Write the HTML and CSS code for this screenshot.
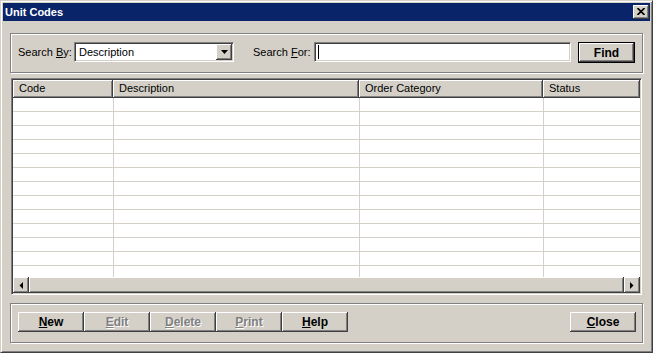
FILE: index.html
```html
<!DOCTYPE html>
<html lang="en">
<head>
    <meta charset="UTF-8">
    <title>Unit Codes</title>
    <link rel="stylesheet" href="styles.css">
</head>
<body>
    <div class="window">
        <div class="titlebar">
            <span class="title">Unit Codes</span>
            <span class="title-close">
                <svg width="8" height="7" viewBox="0 0 8 7"><path d="M0.5 0 L7.5 7 M7.5 0 L0.5 7" stroke="#000" stroke-width="1.6"/></svg>
            </span>
        </div>
        <div class="content">
            <div class="group search">
                <label class="label label-by">Search <u>B</u>y:</label>
                <div class="combo">
                    <span class="combo-text">Description</span>
                    <span class="combo-btn">
                        <svg width="7" height="4" viewBox="0 0 7 4"><polygon points="0,0 7,0 3.5,4" fill="#000"/></svg>
                    </span>
                </div>
                <label class="label label-for">Search <u>F</u>or:</label>
                <div class="field"><span class="caret"></span></div>
                <button class="btn btn-default">Find</button>
            </div>

            <div class="grid">
                <div class="grid-head">
                    <div class="col col-code">Code</div>
                    <div class="col col-desc">Description</div>
                    <div class="col col-cat">Order Category</div>
                    <div class="col col-status">Status</div>
                </div>
                <div class="grid-body">
                    <div class="row"><span></span><span></span><span></span><span></span></div>
                    <div class="row"><span></span><span></span><span></span><span></span></div>
                    <div class="row"><span></span><span></span><span></span><span></span></div>
                    <div class="row"><span></span><span></span><span></span><span></span></div>
                    <div class="row"><span></span><span></span><span></span><span></span></div>
                    <div class="row"><span></span><span></span><span></span><span></span></div>
                    <div class="row"><span></span><span></span><span></span><span></span></div>
                    <div class="row"><span></span><span></span><span></span><span></span></div>
                    <div class="row"><span></span><span></span><span></span><span></span></div>
                    <div class="row"><span></span><span></span><span></span><span></span></div>
                    <div class="row"><span></span><span></span><span></span><span></span></div>
                    <div class="row"><span></span><span></span><span></span><span></span></div>
                    <div class="row"><span></span><span></span><span></span><span></span></div>
                </div>
                <div class="hscroll">
                    <span class="sb-btn">
                        <svg width="4" height="7" viewBox="0 0 4 7"><polygon points="4,0 4,7 0.5,3.5" fill="#000"/></svg>
                    </span>
                    <span class="sb-thumb"></span>
                    <span class="sb-btn">
                        <svg width="4" height="7" viewBox="0 0 4 7"><polygon points="0,0 0,7 3.5,3.5" fill="#000"/></svg>
                    </span>
                </div>
            </div>

            <div class="group actions">
                <button class="btn"><u>N</u>ew</button>
                <button class="btn" disabled><u>E</u>dit</button>
                <button class="btn" disabled><u>D</u>elete</button>
                <button class="btn" disabled><u>P</u>rint</button>
                <button class="btn"><u>H</u>elp</button>
                <button class="btn btn-close"><u>C</u>lose</button>
            </div>
        </div>
    </div>
</body>
</html>
```

FILE: styles.css
```css
body {
    margin: 0;
    background: #d4d0c8;
    font-family: "Liberation Sans", Arial, sans-serif;
    font-size: 11px;
    color: #000;
}
.window {
    width: 653px;
    height: 353px;
    box-sizing: border-box;
    border: 1px solid;
    border-color: #d4d0c8 #404040 #404040 #d4d0c8;
    box-shadow: inset 1px 1px #fff, inset -1px -1px #808080;
    padding: 2px;
    background: #d4d0c8;
    display: flex;
    flex-direction: column;
}
.titlebar {
    height: 18px;
    background: #0a246a;
    display: flex;
    align-items: center;
    padding: 0 1px 0 2px;
}
.title {
    flex: 1;
    color: #fff;
    font-weight: bold;
    font-size: 11px;
}
.title-close {
    width: 16px;
    height: 14px;
    box-sizing: border-box;
    background: #d4d0c8;
    box-shadow: inset -1px -1px #404040, inset 1px 1px #fff, inset -2px -2px #808080, inset 2px 2px #d4d0c8;
    display: flex;
    align-items: center;
    justify-content: center;
    padding-bottom: 1px;
}
.content {
    padding: 12px 7px 0 7px;
}

/* etched group box */
.group {
    height: 40px;
    box-sizing: border-box;
    border: 1px solid #808080;
    box-shadow: 1px 1px #fff, inset 1px 1px #fff;
    display: flex;
    align-items: flex-start;
    padding: 8px 6px 0 7px;
}
.label {
    line-height: 20px;
    white-space: nowrap;
}
.label-by {
    width: 56px;
}
.label-for {
    width: 61px;
    margin-left: 19px;
}
.combo, .field {
    height: 20px;
    box-sizing: border-box;
    border: 1px solid;
    border-color: #808080 #fff #fff #808080;
    box-shadow: inset 1px 1px #404040, inset -1px -1px #d4d0c8;
    background: #fff;
    padding: 1px;
    display: flex;
}
.combo {
    width: 160px;
}
.combo-text {
    flex: 1;
    line-height: 16px;
    padding-left: 3px;
}
.combo-btn {
    width: 16px;
    height: 16px;
    box-sizing: border-box;
    background: #d4d0c8;
    box-shadow: inset -1px -1px #404040, inset 1px 1px #fff, inset -2px -2px #808080, inset 2px 2px #d4d0c8;
    display: flex;
    align-items: center;
    justify-content: center;
}
.field {
    width: 257px;
    align-items: center;
}
.caret {
    width: 1px;
    height: 14px;
    background: #000;
    margin-left: 2px;
}
.btn {
    width: 66px;
    height: 20px;
    border: 0;
    padding: 0;
    background: #d4d0c8;
    box-shadow: inset -1px -1px #404040, inset 1px 1px #fff, inset -2px -2px #808080, inset 2px 2px #d4d0c8;
    font-family: "Liberation Sans", Arial, sans-serif;
    font-size: 12px;
    font-weight: bold;
    color: #000;
}
.btn:disabled {
    color: #808080;
    text-shadow: 1px 1px #fff;
}
.btn-default {
    width: 57px;
    height: 21px;
    margin-left: 7px;
    border: 1px solid #000;
}
.btn-close {
    margin-left: auto;
}

/* list view */
.grid {
    height: 217px;
    box-sizing: border-box;
    margin: 5px 1px 0 1px;
    border: 1px solid;
    border-color: #808080 #fff #fff #808080;
    box-shadow: inset 1px 1px #404040, inset -1px -1px #d4d0c8;
    padding: 1px;
    background: #fff;
    display: flex;
    flex-direction: column;
}
.grid-head {
    display: flex;
    height: 18px;
    flex-shrink: 0;
}
.col {
    box-sizing: border-box;
    background: #d4d0c8;
    box-shadow: inset -1px -1px #404040, inset 1px 1px #fff, inset -2px -2px #808080, inset 2px 2px #d4d0c8;
    padding-left: 6px;
    line-height: 17px;
    white-space: nowrap;
}
.col-code { width: 100px; }
.col-desc { width: 246px; }
.col-cat { width: 184px; }
.col-status { flex: 1; }
.grid-body {
    flex: 1;
    overflow: hidden;
}
.row {
    display: flex;
    height: 14px;
    box-sizing: border-box;
    border-bottom: 1px solid #d4d0c8;
}
.row span {
    box-sizing: border-box;
    border-right: 1px solid #d4d0c8;
}
.row span:nth-child(1) { width: 101px; }
.row span:nth-child(2) { width: 246px; }
.row span:nth-child(3) { width: 184px; }
.row span:nth-child(4) { flex: 1; border-right: 0; }
.hscroll {
    display: flex;
    height: 16px;
    flex-shrink: 0;
}
.sb-btn, .sb-thumb {
    box-sizing: border-box;
    background: #d4d0c8;
    box-shadow: inset -1px -1px #404040, inset 1px 1px #fff, inset -2px -2px #808080, inset 2px 2px #d4d0c8;
}
.sb-btn {
    width: 16px;
    display: flex;
    align-items: center;
    justify-content: center;
}
.sb-thumb {
    flex: 1;
}
.actions {
    margin-top: 8px;
}
```
